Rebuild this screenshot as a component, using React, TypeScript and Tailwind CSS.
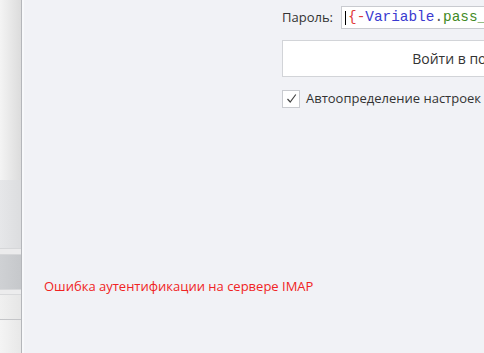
export default function App() {
  return (
    <div className="flex h-[353px] w-[484px] overflow-hidden bg-[#f1f2f6] font-['Open_Sans',sans-serif]">
      {/* left side list strip */}
      <div className="flex w-[22px] shrink-0 flex-col border-r border-[#b4b6ba]">
        <div className="h-[180px] bg-gradient-to-r from-[#f4f4f4] to-[#dcdcdc]" />
        <div className="h-[68px] bg-gradient-to-r from-[#e6e7e9] to-[#dcdddf]" />
        <div className="h-[7px] border-y border-[#d6d7d9] bg-[#ebebec]" />
        <div className="h-[34px] bg-gradient-to-r from-[#cfd1d4] to-[#c6c8cb]" />
        <div className="h-[6px] border-y border-[#d8d9db] bg-[#ececed]" />
        <div className="h-[24px] bg-gradient-to-r from-[#f0f0f0] to-[#e6e6e6]" />
        <div className="h-px bg-[#c4c5c8]" />
        <div className="flex-1 bg-gradient-to-r from-[#f4f4f4] to-[#e8e8e8]" />
      </div>

      <div className="flex min-w-0 flex-1 flex-col border-l-2 border-[#f7f8fa]">
        {/* form */}
        <div className="ml-[258px] mt-[6px] flex flex-col">
          <div className="flex items-center">
            <span className="w-[59px] shrink-0 text-[13px] text-[#333]">Пароль:</span>
            <div className="flex h-[23px] w-[220px] shrink-0 items-center border border-[#c9cbd0] bg-white pl-[3px]">
              <span className="mr-[2px] h-[14px] w-px bg-black" />
              <span className="whitespace-nowrap font-['Liberation_Mono',monospace] text-[14.4px] leading-none">
                <span className="text-[#e03a3a]">{"{-"}</span>
                <span className="text-[#3a3ad0]">Variable</span>
                <span className="text-[#555]">.</span>
                <span className="text-[#3f8a24]">pass_word{"}"}</span>
              </span>
            </div>
          </div>

          <button className="mt-[11px] flex h-[37px] w-[426px] shrink-0 items-center justify-center border border-[#d2d4d8] bg-white text-[14px] text-[#333]">
            Войти в почтовый ящик
          </button>

          <label className="mt-[12px] flex items-center gap-[6px]">
            <span className="flex h-[18px] w-[18px] shrink-0 items-center justify-center border border-[#c9cbd0] bg-white">
              <svg width="11" height="11" viewBox="0 0 11 11">
                <path d="M1.5 6 L4.2 9 L9.8 1.5" fill="none" stroke="#444" strokeWidth="1.2" />
              </svg>
            </span>
            <span className="whitespace-nowrap text-[13px] text-[#333]">Автоопределение настроек сервера</span>
          </label>
        </div>

        {/* error */}
        <div className="ml-[20px] mt-[168px] text-[13px] text-[#f02424]">Ошибка аутентификации на сервере IMAP</div>
      </div>
    </div>
  );
}
